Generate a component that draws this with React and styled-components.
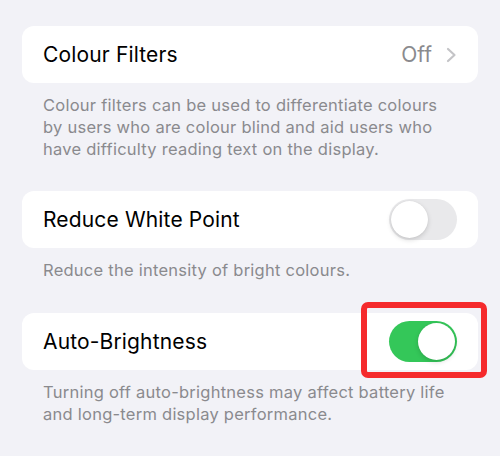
import React from 'react';
import styled, { createGlobalStyle } from 'styled-components';

const GlobalStyle = createGlobalStyle`
  html, body {
    margin: 0;
    padding: 0;
    background: #f2f2f7;
  }
  body {
    font-family: Inter, "Open Sans", "Liberation Sans", sans-serif;
    -webkit-font-smoothing: antialiased;
  }
`;

const Page = styled.div`
  width: 500px;
  height: 456px;
  box-sizing: border-box;
  padding: 26px 22px 0;
  background: #f2f2f7;
  overflow: hidden;
`;

const Group = styled.section`
  margin-bottom: ${p => p.$gap}px;
`;

const Card = styled.div`
  height: 57px;
  box-sizing: border-box;
  background: #fff;
  border-radius: 12px;
  padding: 0 21px;
  display: flex;
  align-items: center;
  justify-content: space-between;
`;

const Label = styled.span`
  font-size: 21px;
  color: #000;
  letter-spacing: 0.15px;
`;

const Detail = styled.span`
  display: flex;
  align-items: center;
  gap: 14px;
  font-size: 21px;
  color: #8a8a8e;
`;

const Footer = styled.p`
  margin: 11px 0 0;
  padding: 0 21px;
  font-size: 16.5px;
  line-height: 22px;
  letter-spacing: 0.25px;
  color: #8a8a8e;
`;

const SwitchWrap = styled.div`
  position: relative;
  display: flex;
`;

const Track = styled.div`
  width: 68px;
  height: 41px;
  border-radius: 21px;
  background: ${p => (p.$on ? '#34c759' : '#e9e9eb')};
  position: relative;
`;

const Knob = styled.div`
  position: absolute;
  top: 2px;
  left: ${p => (p.$on ? '29px' : '2px')};
  width: 37px;
  height: 37px;
  border-radius: 50%;
  background: #fff;
  box-shadow: 0 2px 5px rgba(0, 0, 0, 0.15), 0 0 1px rgba(0, 0, 0, 0.1);
`;

const Highlight = styled.div`
  position: absolute;
  left: -28px;
  right: -30px;
  top: -19px;
  bottom: -16px;
  border: 6px solid #f52a2c;
  border-radius: 7px;
  pointer-events: none;
`;

const Chevron = () => (
  <svg width="11" height="16" viewBox="0 0 11 16">
    <polyline
      points="2,2 8.5,8 2,14"
      fill="none"
      stroke="#c4c4c7"
      strokeWidth="2.2"
      strokeLinecap="round"
      strokeLinejoin="round"
    />
  </svg>
);

const Switch = ({ on, marked }) => (
  <SwitchWrap>
    <Track $on={on}>
      <Knob $on={on} />
    </Track>
    {marked && <Highlight />}
  </SwitchWrap>
);

export default function App() {
  return (
    <>
      <GlobalStyle />
      <Page>
        <Group $gap={31}>
          <Card>
            <Label>Colour Filters</Label>
            <Detail>
              Off
              <Chevron />
            </Detail>
          </Card>
          <Footer>
            Colour filters can be used to differentiate colours by users who are colour blind and aid users who have difficulty reading text on the display.
          </Footer>
        </Group>
        <Group $gap={32}>
          <Card>
            <Label>Reduce White Point</Label>
            <Switch on={false} />
          </Card>
          <Footer>Reduce the intensity of bright colours.</Footer>
        </Group>
        <Group $gap={0}>
          <Card>
            <Label>Auto-Brightness</Label>
            <Switch on marked />
          </Card>
          <Footer>
            Turning off auto-brightness may affect battery life and long-term display performance.
          </Footer>
        </Group>
      </Page>
    </>
  );
}
